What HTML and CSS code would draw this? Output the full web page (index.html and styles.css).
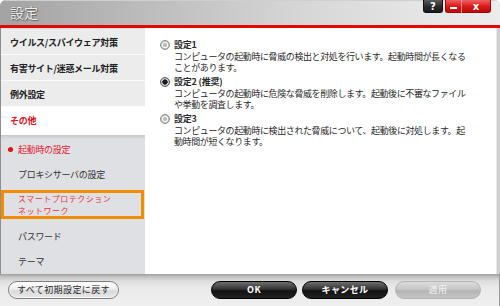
FILE: index.html
```html
<!DOCTYPE html>
<html lang="ja">
<head>
<meta charset="utf-8">
<title>設定</title>
<link rel="stylesheet" href="styles.css">
</head>
<body>
<div class="window">
  <header class="titlebar">
    <span class="title">設定</span>
    <div class="controls">
      <span class="ctl ctl-help">?</span>
      <span class="ctl ctl-min"><span class="dash"></span></span>
      <span class="ctl ctl-close">x</span>
    </div>
  </header>
  <div class="main">
    <nav class="sidebar">
      <div class="nav-item first">ウイルス/スパイウェア対策</div>
      <div class="nav-item">有害サイト/迷惑メール対策</div>
      <div class="nav-item">例外設定</div>
      <div class="nav-item active">その他</div>
      <div class="subnav">
        <div class="sub-item current"><span class="dot"></span>起動時の設定</div>
        <div class="sub-item">プロキシサーバの設定</div>
        <div class="sub-item highlight"><span class="hl-line">スマートプロテクション</span><span class="hl-line">ネットワーク</span></div>
        <div class="sub-item">パスワード</div>
        <div class="sub-item">テーマ</div>
      </div>
    </nav>
    <section class="content">
      <div class="option">
        <span class="radio"></span>
        <div class="option-text">
          <div class="option-title">設定1</div>
          <div>コンピュータの起動時に脅威の検出と対処を行います。起動時間が長くなる<br>ことがあります。</div>
        </div>
      </div>
      <div class="option">
        <span class="radio checked"></span>
        <div class="option-text">
          <div class="option-title">設定2 (推奨)</div>
          <div>コンピュータの起動時に危険な脅威を削除します。起動後に不審なファイル<br>や挙動を調査します。</div>
        </div>
      </div>
      <div class="option">
        <span class="radio"></span>
        <div class="option-text">
          <div class="option-title">設定3</div>
          <div>コンピュータの起動時に検出された脅威について、起動後に対処します。起<br>動時間が短くなります。</div>
        </div>
      </div>
    </section>
  </div>
  <footer class="footer">
    <button class="btn btn-light btn-reset">すべて初期設定に戻す</button>
    <div class="actions">
      <button class="btn btn-dark">OK</button>
      <button class="btn btn-dark">キャンセル</button>
      <button class="btn btn-disabled">適用</button>
    </div>
  </footer>
</div>
</body>
</html>
```
FILE: styles.css
```css
html, body {
  margin: 0;
  padding: 0;
  background: #ffffff;
}
body {
  width: 500px;
  height: 306px;
  overflow: hidden;
  font-family: "Noto Sans CJK JP", "Noto Sans", sans-serif;
  font-size: 9px;
  color: #222;
}
.window {
  width: 500px;
  height: 306px;
  display: flex;
  flex-direction: column;
  box-sizing: border-box;
  border-radius: 6px 6px 0 0;
  overflow: hidden;
  background: #d8d8d8;
}
.titlebar {
  height: 25px;
  flex: none;
  display: flex;
  justify-content: space-between;
  align-items: flex-start;
  border-bottom: 3px solid #e00808;
  background: linear-gradient(90deg, #a3a3a3 0%, #bdbdbd 30%, #d6d6d6 60%, #e6e6e6 85%, #ececec 100%);
  box-shadow: inset 0 1px 0 #cfcfcf;
}
.title {
  font-size: 14px;
  line-height: 25px;
  padding-left: 10px;
  color: #eeeeee;
  text-shadow: 0 0 1px #555, 1px 1px 1px #666;
}
.controls {
  display: flex;
  margin-right: 9px;
}
.ctl {
  height: 13px;
  display: flex;
  align-items: center;
  justify-content: center;
  color: #fff;
  font-family: "DejaVu Sans", sans-serif;
  font-weight: bold;
  font-size: 10px;
  line-height: 13px;
  box-sizing: border-box;
}
.ctl-help {
  width: 20px;
  margin-right: 2px;
  background: linear-gradient(#5a5a5a, #2a2a2a 55%, #1a1a1a);
  border: 1px solid #111;
  border-top: none;
  border-radius: 0 0 3px 3px;
}
.ctl-min {
  width: 17px;
  background: linear-gradient(#f06060, #d81818 55%, #c00c0c);
  border: 1px solid #9a0a0a;
  border-top: none;
  border-right: 1px solid #ff8a8a;
  border-radius: 0 0 0 3px;
}
.dash {
  display: block;
  width: 7px;
  height: 2px;
  margin-top: 3px;
  background: #fff;
}
.ctl-close {
  width: 29px;
  background: linear-gradient(#f06060, #d81818 55%, #c00c0c);
  border: 1px solid #9a0a0a;
  border-top: none;
  border-left: none;
  border-radius: 0 0 3px 0;
}
.main {
  flex: none;
  height: 246px;
  display: flex;
}
.sidebar {
  width: 145px;
  flex: none;
  box-sizing: border-box;
  border-left: 1px solid #8e8e8e;
  background: #dfe0e4;
  display: flex;
  flex-direction: column;
  padding-top: 1px;
}
.nav-item {
  height: 25px;
  line-height: 28px;
  border-bottom: 1px solid #fbfbfd;
  padding-left: 9px;
  font-weight: bold;
  color: #222;
  background: #ececec;
  white-space: nowrap;
  letter-spacing: -0.3px;
}
.nav-item.active {
  height: 28px;
  line-height: 28px;
  background: #fff;
  color: #e0101c;
  border-bottom: none;
}
.subnav {
  flex: 1;
  display: flex;
  flex-direction: column;
  padding-top: 2px;
  background: linear-gradient(#c6c7cb 0, #dcdde1 4px, #dfe0e4 8px);
}
.sub-item {
  height: 25px;
  line-height: 25px;
  padding-left: 17px;
  color: #333;
  letter-spacing: -0.3px;
  white-space: nowrap;
}
.sub-item.current {
  color: #e42030;
  display: flex;
  align-items: center;
  padding-left: 7px;
}
.dot {
  width: 5px;
  height: 5px;
  border-radius: 50%;
  background: #e01010;
  margin-right: 5px;
}
.sub-item.highlight {
  height: 29px;
  box-sizing: border-box;
  margin: 3px 1px 5px 0;
  border: 3px solid #f28c00;
  padding: 0 0 0 14px;
  display: flex;
  flex-direction: column;
  color: #e83040;
}
.hl-line {
  display: block;
  font-size: 8px;
  letter-spacing: 0.5px;
  line-height: 11.5px;
  height: 11.5px;
}
.content {
  flex: 1;
  background: #fff;
  box-sizing: border-box;
  border-right: 3px solid #cfcfcf;
  box-shadow: inset -1px 0 0 #e8e8e8;
  padding: 11px 0 0 15px;
  display: flex;
  flex-direction: column;
  gap: 2.5px;
}
.option {
  display: flex;
  align-items: flex-start;
  line-height: 11.5px;
  color: #2a2a2a;
  letter-spacing: -0.4px;
  white-space: nowrap;
}
.option-title {
  font-weight: bold;
  letter-spacing: -0.2px;
}
.radio {
  flex: none;
  width: 10px;
  height: 10px;
  box-sizing: border-box;
  margin-top: 1px;
  margin-right: 4px;
  border-radius: 50%;
  border: 1px solid #8c8c8c;
  background: radial-gradient(circle, #bcbcbc 0 1.8px, #f6f6f6 2.4px 2.8px, #c4c4c4 3.6px);
}
.radio.checked {
  border-color: #555;
  background: radial-gradient(circle, #1c1c1c 0 2.4px, #f0f0f0 3px, #aaaaaa 4px);
}
.footer {
  flex: 1;
  display: flex;
  justify-content: space-between;
  align-items: flex-start;
  padding: 7px 18px 0 8px;
  border-right: 1px solid #9a9a9a;
  background: linear-gradient(#9e9e9e 0, #c4c4c4 3px, #dedede 7px, #eaeaea 14px, #efefef 100%);
}
.actions {
  display: flex;
  gap: 5px;
}
.btn {
  height: 18px;
  box-sizing: border-box;
  border-radius: 9px;
  padding: 0;
  font-family: "Noto Sans CJK JP", "Noto Sans", sans-serif;
  font-size: 9px;
  line-height: 16px;
  letter-spacing: 0.4px;
  cursor: default;
}
.btn-reset {
  width: 111px;
}
.btn-light {
  border: 1px solid #7e7e7e;
  color: #2a2a2a;
  background: linear-gradient(#ffffff, #eeeeee 45%, #dadada 55%, #e8e8e8);
  box-shadow: inset 0 0 0 1px #f8f8f8;
}
.btn-dark {
  width: 86px;
  border: 1px solid #000;
  color: #fff;
  font-weight: bold;
  background: linear-gradient(#6e6e6e, #333 45%, #111 55%, #222);
}
.btn-disabled {
  width: 86px;
  margin-left: 2px;
  border: 1px solid #b4b4b4;
  color: #f2f2f2;
  background: linear-gradient(#dcdcdc, #c6c6c6 45%, #b4b4b4 55%, #c4c4c4);
}
```
